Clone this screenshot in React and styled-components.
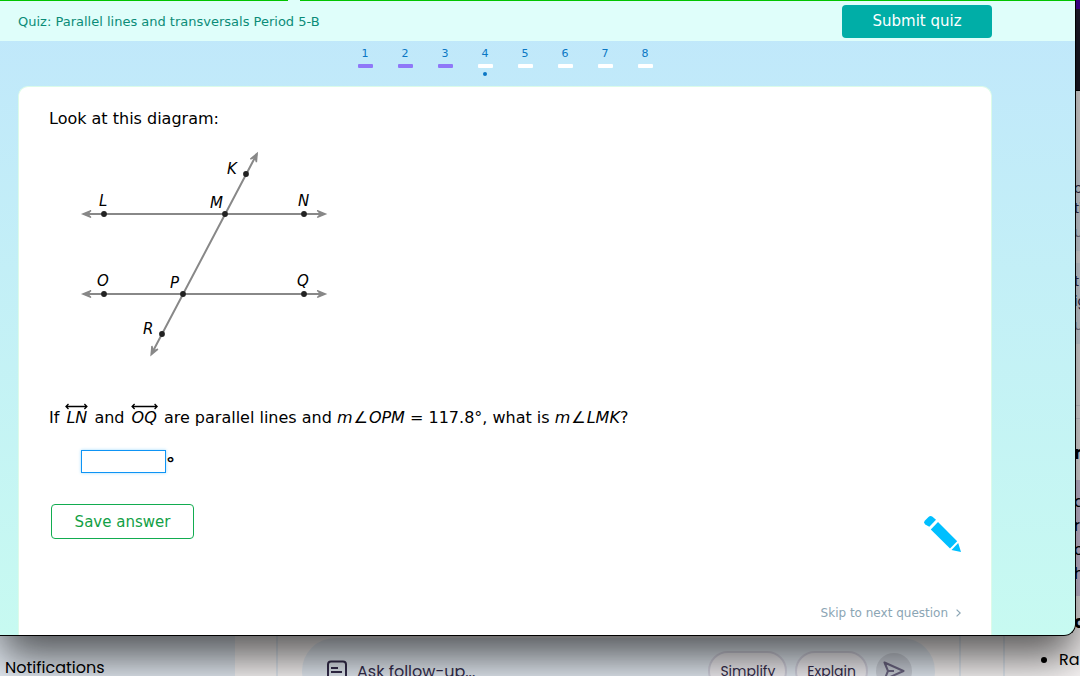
import React, { useState } from "react";
import styled, { createGlobalStyle } from "styled-components";

const GlobalStyle = createGlobalStyle`
  * {
    box-sizing: border-box;
  }

  body {
    margin: 0;
    font-family: Verdana, "DejaVu Sans", sans-serif;
    color: #000;
  }

  button,
  input {
    font-family: inherit;
    margin: 0;
  }

  p,
  h1,
  h3,
  ul {
    margin: 0;
    padding: 0;
    font-weight: 400;
  }
`;

const Desktop = styled.div`
  position: relative;
  height: 100vh;
  overflow: hidden;
`;

/* ---------- page behind the quiz window ---------- */

const BackPage = styled.div`
  display: flex;
  flex-direction: column;
  height: 100%;
  font-family: Poppins, Inter, sans-serif;
  background: #fbf8f8;
`;

const BackHeader = styled.div`
  height: 91px;
  flex-shrink: 0;
  background: #1d1a28;
  border-top: 9px solid #3c0088;
  border-bottom: 1px solid #000;
`;

const BackBody = styled.div`
  display: flex;
  flex: 1;
  min-height: 0;
`;

const BackSidebar = styled.div`
  display: flex;
  flex-direction: column;
  justify-content: flex-end;
  width: 235px;
  padding-left: 5px;
  font-size: 16px;
  line-height: 16px;
  background: #e6edf5;
`;

const BackMain = styled.div`
  display: flex;
  flex: 1;
  padding: 0 42px 0 41px;
`;

const ChatPanel = styled.div`
  display: flex;
  flex: 1;
  flex-direction: column;
  justify-content: flex-end;
  border: solid #e4ebf3;
  border-width: 0 2px;
`;

const ChatBar = styled.div`
  display: flex;
  align-items: center;
  gap: 8px;
  height: 66px;
  margin: 0 24px -28px;
  padding: 0 23px;
  border-radius: 33px;
  background: #e6edf5;
  color: #352d4d;
`;

const AskText = styled.span`
  flex: 1;
  margin-left: 2px;
  font-size: 16px;
`;

const Pill = styled.button`
  height: 40px;
  padding: 0 10px;
  border: 2px solid #d6d5e2;
  border-radius: 20px;
  background: #f4f2f6;
  color: #352d4d;
  font-size: 14px;
`;

const SendButton = styled.button`
  display: flex;
  align-items: center;
  justify-content: center;
  width: 36px;
  height: 36px;
  padding: 0;
  border: none;
  border-radius: 50%;
  background: #ced3dc;
`;

const BackAside = styled.div`
  width: 77px;
  overflow: hidden;
  white-space: nowrap;
  border-left: 2px solid #e4ebf3;
`;

const AsideCard = styled.div`
  height: 81px;
  margin-bottom: 12px;
  padding: 8px 0 0 69px;
  font-size: 14px;
  line-height: 20px;
  color: #352d4d;
  background: #e6edf5;

  &:first-child {
    margin-top: 79px;
  }
`;

const AsideMeta = styled.div`
  margin-top: 4px;
  color: #8a879b;
`;

const AsideHeading = styled.h3`
  padding-left: 69px;
  font-size: 18px;
  line-height: 24px;
  font-weight: 700;
`;

const AsideRule = styled.div`
  height: 14px;
  margin: 61px 0 22px;
  border: solid #e0dfe6;
  border-width: 1px 0;
`;

const AsideQuote = styled.div`
  height: 116px;
  margin: 15px 0 14px;
  padding: 10px 0 0 69px;
  font-size: 16px;
  line-height: 24px;
  background: #ddd0ea;
`;

const AsideList = styled.ul`
  margin-top: 14px;
  padding-left: 54px;
  font-size: 16px;
  line-height: 24px;
`;

/* ---------- quiz window ---------- */

const QuizWindow = styled.div`
  position: absolute;
  inset: 0 4px 40px 0;
  display: flex;
  flex-direction: column;
  overflow: hidden;
  border: solid #000;
  border-width: 0 1px 1px 0;
  border-radius: 0 0 12px 0;
  background: linear-gradient(to bottom, #c0e7fb, #c7faf1);
  box-shadow: 0 22px 44px rgba(0, 0, 0, 0.65);
`;

const ProgressLine = styled.div`
  display: flex;
  gap: 12px;
  height: 1px;
  background: #dffefa;
`;

const ProgressPart = styled.div`
  flex: ${({ $grow }) => $grow};
  background: #00c400;
`;

const QuizHeader = styled.header`
  display: flex;
  align-items: center;
  justify-content: space-between;
  height: 40px;
  flex-shrink: 0;
  padding: 0 83px 0 18px;
  background: #dffefa;
`;

const QuizTitle = styled.h1`
  padding-top: 2px;
  font-size: 13px;
  line-height: 16px;
  color: #0b8c78;
`;

const SubmitButton = styled.button`
  width: 150px;
  height: 33px;
  border: none;
  border-radius: 4px;
  background: #00aea7;
  color: #fff;
  font-size: 15px;
  cursor: pointer;
`;

const QuizMain = styled.main`
  display: flex;
  flex: 1;
  flex-direction: column;
  min-height: 0;
  padding: 0 83px 0 18px;
`;

const Steps = styled.nav`
  display: flex;
  justify-content: center;
  height: 45px;
  flex-shrink: 0;
`;

const Step = styled.button`
  display: flex;
  flex-direction: column;
  align-items: center;
  width: 40px;
  padding: 6px 0 0;
  border: none;
  background: none;
  color: #0a77c4;
  font-size: 11px;
  line-height: 14px;
  cursor: pointer;
`;

const StepBar = styled.span`
  width: 15px;
  height: 4px;
  margin: 3px 0 4px;
  border-radius: 1px;
  background: ${({ $done }) => ($done ? "#8f78f8" : "#fff")};
`;

const StepDot = styled.span`
  width: 4px;
  height: 4px;
  border-radius: 50%;
  background: #0a77c4;
`;

const Card = styled.section`
  flex: 1;
  min-height: 0;
  padding: 20px 30px 0;
  border: 1px solid #dcfbe9;
  border-bottom: none;
  border-radius: 10px 10px 0 0;
  background: #fff;
  font-size: 16px;
  line-height: 24px;
`;

const Diagram = styled.svg`
  display: block;
  margin: 15px 0 46px 30px;
  font-size: 15px;
  font-style: italic;
`;

const LineName = styled.i`
  position: relative;
  display: inline-block;
  margin: 0 1px;
  padding: 0 1px;
`;

const OverArrow = styled.svg`
  position: absolute;
  top: -3px;
  left: 0;
  width: 100%;
  height: 7px;
  overflow: visible;
`;

const AngleSign = styled.span`
  padding: 0 1px;
`;

const AnswerRow = styled.label`
  display: flex;
  margin: 20px 0 31px 32px;
  height: 23px;
  font-size: 18px;
  line-height: 28px;
  font-weight: 700;
`;

const AnswerInput = styled.input`
  width: 85px;
  height: 23px;
  padding: 0 4px;
  border: 1px solid #0e94f5;
  outline: none;
  font-size: 16px;
  box-shadow: 0 0 3px #9fd9fb;
`;

const ActionRow = styled.div`
  display: flex;
  justify-content: space-between;
  padding-left: 2px;
`;

const SaveButton = styled.button`
  width: 143px;
  height: 35px;
  border: 1px solid #12ac50;
  border-radius: 4px;
  background: #fff;
  color: #12a045;
  font-size: 15px;
  cursor: pointer;
`;

const PencilButton = styled.button`
  height: 36px;
  margin-top: 12px;
  padding: 0;
  border: none;
  background: none;
  cursor: pointer;
`;

const SkipLink = styled.a`
  display: flex;
  align-items: center;
  justify-content: flex-end;
  gap: 8px;
  margin-top: 52px;
  color: #8ba5b4;
  font-size: 12px;
  line-height: 18px;
  text-decoration: none;
`;

const points = [
  { name: "K", x: 167, y: 28, tx: 148, ty: 28 },
  { name: "L", x: 25, y: 68, tx: 20, ty: 60 },
  { name: "M", x: 146, y: 68, tx: 131, ty: 62 },
  { name: "N", x: 225, y: 68, tx: 219, ty: 60 },
  { name: "O", x: 25, y: 148, tx: 18, ty: 140 },
  { name: "P", x: 104, y: 148, tx: 91, ty: 142 },
  { name: "Q", x: 225, y: 148, tx: 218, ty: 140 },
  { name: "R", x: 83, y: 188, tx: 64, ty: 188 },
];

const arrows = [
  { x: 246.5, y: 68, angle: 0 },
  { x: 3.8, y: 68, angle: 180 },
  { x: 246.5, y: 148, angle: 0 },
  { x: 3.8, y: 148, angle: 180 },
  { x: 178.2, y: 7.3, angle: -62.3 },
  { x: 72.1, y: 208.8, angle: 117.7 },
];

const LinesDiagram = () => (
  <Diagram width="250" height="214" viewBox="0 0 250 214">
    <g stroke="#888" strokeWidth="2" fill="none">
      <path d="M5 68H245M5 148H245M177.7 8.3L72.6 207.8" />
      {arrows.map((a, i) => (
        <path
          key={i}
          fill="#888"
          strokeWidth="1.4"
          d="M-8.2 -3.4L0 0L-8.2 3.4L-5.4 0.8V-0.8Z"
          transform={`translate(${a.x} ${a.y}) rotate(${a.angle})`}
        />
      ))}
    </g>
    {points.map((p) => (
      <g key={p.name}>
        <circle cx={p.x} cy={p.y} r="2.9" fill="#222" />
        <text x={p.tx} y={p.ty}>
          {p.name}
        </text>
      </g>
    ))}
  </Diagram>
);

const Line = ({ name, width }) => (
  <LineName>
    {name}
    <OverArrow viewBox={`0 0 ${width} 7`} fill="none" stroke="#000" strokeWidth="1.3">
      <path
        d={`M1 3.5H${width - 1}M3.5 1L1 3.5L3.5 6M${width - 3.5} 1L${width - 1} 3.5L${width - 3.5} 6`}
      />
    </OverArrow>
  </LineName>
);

const Angle = ({ name }) => (
  <i>
    m<AngleSign>∠</AngleSign>
    {name}
  </i>
);

const Background = () => (
  <BackPage>
    <BackHeader />
    <BackBody>
      <BackSidebar>Notifications</BackSidebar>
      <BackMain>
        <ChatPanel>
          <ChatBar>
            <svg width="22" height="22" viewBox="0 0 22 22" fill="none" stroke="#352d4d" strokeWidth="2">
              <rect x="3" y="1.5" width="18" height="17" rx="3" />
              <path d="M6 8H13M6 12H17" />
            </svg>
            <AskText>Ask follow-up...</AskText>
            <Pill>Simplify</Pill>
            <Pill>Explain</Pill>
            <SendButton aria-label="Send">
              <svg width="22" height="20" viewBox="0 0 22 20" fill="none" stroke="#6d6784" strokeWidth="2" strokeLinejoin="round">
                <path d="M1.5 1.5L20.5 10L1.5 18.5L5 10Z M5 10H11" />
              </svg>
            </SendButton>
          </ChatBar>
        </ChatPanel>
      </BackMain>
      <BackAside>
        <AsideCard>
          c<br />
          ti
          <AsideMeta>u</AsideMeta>
        </AsideCard>
        <AsideCard>
          t<br />
          ig
          <AsideMeta>u</AsideMeta>
        </AsideCard>
        <AsideRule />
        <AsideHeading>n</AsideHeading>
        <AsideQuote>
          d<br />
          r<br />
          c<br />
          h
        </AsideQuote>
        <AsideHeading>c</AsideHeading>
        <AsideList>
          <li>Ra</li>
        </AsideList>
      </BackAside>
    </BackBody>
  </BackPage>
);

const App = () => {
  const [answer, setAnswer] = useState("");
  const [current, setCurrent] = useState(4);

  return (
    <>
      <GlobalStyle />
      <Desktop>
        <Background />
        <QuizWindow>
          <ProgressLine>
            <ProgressPart $grow={288} />
            <ProgressPart $grow={775} />
          </ProgressLine>
          <QuizHeader>
            <QuizTitle>Quiz: Parallel lines and transversals Period 5-B</QuizTitle>
            <SubmitButton>Submit quiz</SubmitButton>
          </QuizHeader>
          <QuizMain>
            <Steps>
              {[1, 2, 3, 4, 5, 6, 7, 8].map((n) => (
                <Step key={n} onClick={() => setCurrent(n)}>
                  {n}
                  <StepBar $done={n < 4} />
                  {n === current && <StepDot />}
                </Step>
              ))}
            </Steps>
            <Card>
              <p>Look at this diagram:</p>
              <LinesDiagram />
              <p>
                If <Line name="LN" width={23} /> and <Line name="OQ" width={27} /> are
                parallel lines and <Angle name="OPM" /> = 117.8°, what is{" "}
                <Angle name="LMK" />?
              </p>
              <AnswerRow>
                <AnswerInput
                  type="text"
                  aria-label="Angle in degrees"
                  value={answer}
                  onChange={(e) => setAnswer(e.target.value)}
                />
                °
              </AnswerRow>
              <ActionRow>
                <SaveButton>Save answer</SaveButton>
                <PencilButton aria-label="Scratchpad">
                  <svg width="37" height="36" viewBox="0 0 37 36" fill="#00bfff">
                    <path d="M1 4.5L4.5 1Q6.5 -0.8 8.5 0.8L12 3.8L5.3 10.8L1.2 8.4Q-0.8 6.5 1 4.5Z" />
                    <path d="M14 6L33.2 25.2L26 32.5L6.8 13.4Z" />
                    <path d="M34.2 27L37 36L27.5 34Z" />
                  </svg>
                </PencilButton>
              </ActionRow>
              <SkipLink href="#next">
                Skip to next question
                <svg width="5" height="8" viewBox="0 0 5 8" fill="none" stroke="#8ba5b4" strokeWidth="1.2">
                  <path d="M0.6 0.6L4.2 4L0.6 7.4" />
                </svg>
              </SkipLink>
            </Card>
          </QuizMain>
        </QuizWindow>
      </Desktop>
    </>
  );
};

export default App;
